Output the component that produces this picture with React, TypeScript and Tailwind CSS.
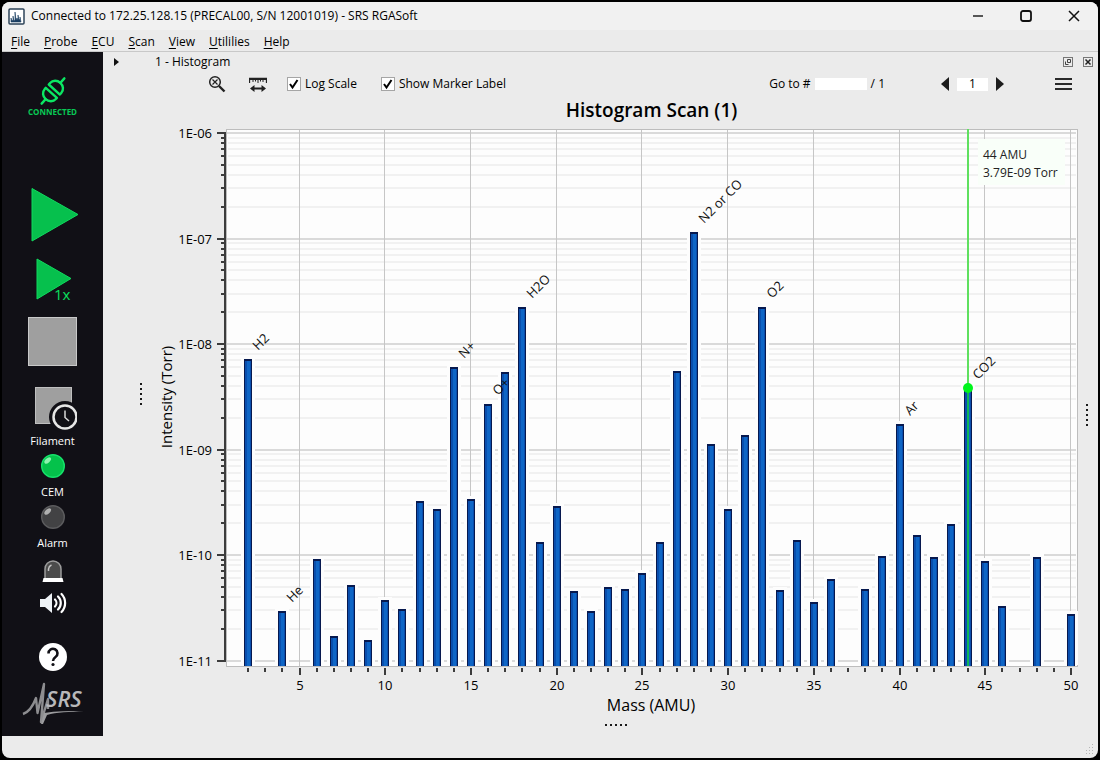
import { useState } from 'react';
import clsx from 'clsx';

type Peak = { mass: number; torr: number; label?: string };

const peaks: Peak[] = [
    { mass: 2, torr: 7.2e-9, label: 'H2' },
    { mass: 4, torr: 2.94e-11, label: 'He' },
    { mass: 6, torr: 9.16e-11 },
    { mass: 7, torr: 1.69e-11 },
    { mass: 8, torr: 5.14e-11 },
    { mass: 9, torr: 1.55e-11 },
    { mass: 10, torr: 3.74e-11 },
    { mass: 11, torr: 3.08e-11 },
    { mass: 12, torr: 3.25e-10 },
    { mass: 13, torr: 2.73e-10 },
    { mass: 14, torr: 6.05e-9, label: 'N+' },
    { mass: 15, torr: 3.4e-10 },
    { mass: 16, torr: 2.7e-9, label: 'O+' },
    { mass: 17, torr: 5.43e-9 },
    { mass: 18, torr: 2.24e-8, label: 'H2O' },
    { mass: 19, torr: 1.33e-10 },
    { mass: 20, torr: 2.91e-10 },
    { mass: 21, torr: 4.51e-11 },
    { mass: 22, torr: 2.94e-11 },
    { mass: 23, torr: 4.98e-11 },
    { mass: 24, torr: 4.71e-11 },
    { mass: 25, torr: 6.82e-11 },
    { mass: 26, torr: 1.33e-10 },
    { mass: 27, torr: 5.55e-9 },
    { mass: 28, torr: 1.15e-7, label: 'N2 or CO' },
    { mass: 29, torr: 1.13e-9 },
    { mass: 30, torr: 2.73e-10 },
    { mass: 31, torr: 1.36e-9 },
    { mass: 32, torr: 2.24e-8, label: 'O2' },
    { mass: 33, torr: 4.61e-11 },
    { mass: 34, torr: 1.39e-10 },
    { mass: 35, torr: 3.59e-11 },
    { mass: 36, torr: 5.86e-11 },
    { mass: 38, torr: 4.71e-11 },
    { mass: 39, torr: 9.79e-11 },
    { mass: 40, torr: 1.75e-9, label: 'Ar' },
    { mass: 41, torr: 1.56e-10 },
    { mass: 42, torr: 9.57e-11 },
    { mass: 43, torr: 1.97e-10 },
    { mass: 44, torr: 3.79e-9, label: 'CO2' },
    { mass: 45, torr: 8.77e-11 },
    { mass: 46, torr: 3.29e-11 },
    { mass: 48, torr: 9.57e-11 },
    { mass: 50, torr: 2.76e-11 },
];

const PLOT = { left: 76, right: 927, top: 5, bottom: 542 };
const decades = [-6, -7, -8, -9, -10, -11];

const xOf = (mass: number) => Math.round(mass * 17.144 + 63.8);
const yOf = (torr: number) => Math.round(9 + (-6 - Math.log10(torr)) * 105.5);

function Chart({ logScale, showLabels }: { logScale: boolean; showLabels: boolean }) {
    const y = (torr: number) => (logScale ? yOf(torr) : Math.round(PLOT.bottom - (torr / 1.2e-7) * 520));
    const masses = Array.from({ length: 49 }, (_, i) => i + 2);
    const minor = decades.slice(1).flatMap((d) => [2, 3, 4, 5, 6, 7, 8, 9].map((n) => yOf(n * 10 ** d)));
    const cursor = xOf(44);

    return (
        <svg viewBox="0 0 930 594" className="block h-auto w-full" role="img" aria-label="Histogram of intensity by mass">
            <rect x={PLOT.left} y={PLOT.top} width={PLOT.right - PLOT.left} height={PLOT.bottom - PLOT.top} fill="#fdfdfd" stroke="#bdbdbd" shapeRendering="crispEdges" />
            <g shapeRendering="crispEdges">
                {minor.map((v) => (
                    <rect key={v} x={PLOT.left + 2} y={v - 1} width={PLOT.right - PLOT.left - 3} height={2} fill="#f1f1f1" />
                ))}
                {decades.map((d) => (
                    <rect key={d} x={PLOT.left + 1} y={yOf(10 ** d) - 1} width={PLOT.right - PLOT.left - 2} height={2} fill="#dadada" />
                ))}
                {masses
                    .filter((m) => m % 5 === 0)
                    .map((m) => (
                        <rect key={m} x={xOf(m) - 1} y={PLOT.top + 1} width={1} height={PLOT.bottom - PLOT.top - 1} fill="#c6c6c6" />
                    ))}
            </g>

            {/* axes */}
            <g fill="#3c3c3c" shapeRendering="crispEdges">
                <rect x={PLOT.left - 2} y={8} width={2} height={530} />
                {minor.map((v) => (
                    <rect key={v} x={PLOT.left - 5} y={v - 1} width={4} height={2} />
                ))}
                {decades.map((d) => (
                    <rect key={d} x={PLOT.left - 9} y={yOf(10 ** d) - 1} width={8} height={2} />
                ))}
                {masses.map((m) => (
                    <rect key={m} x={xOf(m) - 1} y={PLOT.bottom + 2} width={2} height={m % 5 === 0 ? 7 : 4} />
                ))}
            </g>
            <g fontSize="13" fontWeight="500" fill="#000" textAnchor="end">
                {decades.map((d) => (
                    <text key={d} x={62} y={yOf(10 ** d) + 5}>
                        1E-{String(-d).padStart(2, '0')}
                    </text>
                ))}
            </g>
            <g fontSize="13" fontWeight="500" fill="#000" textAnchor="middle">
                {masses
                    .filter((m) => m % 5 === 0)
                    .map((m) => (
                        <text key={m} x={xOf(m)} y={566}>
                            {m}
                        </text>
                    ))}
            </g>
            <text x={501} y={587} fontSize="16" fontWeight="500" textAnchor="middle" fill="#000">
                Mass (AMU)
            </text>
            <text transform="translate(22 273) rotate(-90)" fontSize="15" fontWeight="500" textAnchor="middle" fill="#000">
                Intensity (Torr)
            </text>

            {/* bars */}
            {peaks.map((p) => (
                <rect key={p.mass} x={xOf(p.mass) - 7} y={y(p.torr) - 3} width={14} height={PLOT.bottom - y(p.torr) + 2} fill="#fdfdfd" />
            ))}
            {peaks.map((p) => (
                <g key={p.mass} shapeRendering="crispEdges">
                    <rect x={xOf(p.mass) - 4} y={y(p.torr)} width={8} height={PLOT.bottom - y(p.torr)} fill="#07194f" />
                    <rect x={xOf(p.mass) - 3} y={y(p.torr) + 2} width={6} height={PLOT.bottom - y(p.torr) - 2} fill="#0a4fae" />
                    <rect x={xOf(p.mass) - 1} y={y(p.torr) + 2} width={3} height={PLOT.bottom - y(p.torr) - 2} fill="#0f66c6" />
                </g>
            ))}
            {showLabels &&
                peaks
                    .filter((p) => p.label)
                    .map((p) => (
                        <text key={p.mass} transform={`translate(${xOf(p.mass) + 10} ${y(p.torr) - 8}) rotate(-45)`} fontSize="13" fill="#111">
                            {p.label}
                        </text>
                    ))}

            {/* cursor */}
            <rect x={cursor - 1} y={PLOT.top} width={2} height={y(3.79e-9) - PLOT.top} fill="#5fe05f" shapeRendering="crispEdges" />
            <rect x={cursor - 1} y={y(3.79e-9)} width={2} height={PLOT.bottom - y(3.79e-9)} fill="#10b457" shapeRendering="crispEdges" />
            <circle cx={cursor} cy={y(3.79e-9)} r={5} fill="#00f51d" />
            <rect x={828} y={15} width={87} height={46} fill="#f9fff9" />
            <g fontSize="12" fontWeight="500" fill="#222">
                <text x={833} y={35}>
                    44 AMU
                </text>
                <text x={833} y={53}>
                    3.79E-09 Torr
                </text>
            </g>
        </svg>
    );
}

const menus = ['File', 'Probe', 'ECU', 'Scan', 'View', 'Utililies', 'Help'];

function TitleBar() {
    return (
        <header className="flex h-7 shrink-0 items-center bg-[#f1f1f1] pl-1.5">
            <svg width="17" height="17" viewBox="0 0 17 17" aria-hidden="true">
                <rect x="1" y="1" width="15" height="15" rx="1" fill="#fff" stroke="#2d4358" strokeWidth="1.5" />
                <path d="M3 14v-4l1 3 1-1V8l1 5 1-1V4l1 8 1-2 1 2V7l1 5 1-1V9l1 5z" fill="#1c3f63" stroke="#1c3f63" strokeWidth=".6" />
            </svg>
            <h1 className="ml-1.5 text-xs">Connected to 172.25.128.15 (PRECAL00, S/N 12001019) - SRS RGASoft</h1>
            <div className="ml-auto flex">
                <button aria-label="Minimize" className="flex h-7 w-12 items-center justify-center">
                    <svg width="12" height="12" viewBox="0 0 12 12" stroke="#222" strokeWidth="1.5">
                        <path d="M1 6h10" />
                    </svg>
                </button>
                <button aria-label="Maximize" className="flex h-7 w-12 items-center justify-center">
                    <svg width="12" height="12" viewBox="0 0 12 12" fill="none" stroke="#111" strokeWidth="1.8">
                        <rect x="1" y="1" width="10" height="10" rx="2" />
                    </svg>
                </button>
                <button aria-label="Close" className="flex h-7 w-12 items-center justify-center">
                    <svg width="12" height="12" viewBox="0 0 12 12" stroke="#111" strokeWidth="1.5">
                        <path d="M1 1l10 10M11 1L1 11" />
                    </svg>
                </button>
            </div>
        </header>
    );
}

function Led({ on }: { on?: boolean }) {
    return (
        <svg width="26" height="26" viewBox="0 0 26 26" aria-hidden="true">
            <circle cx="13" cy="13" r="11.3" fill={on ? '#04c24b' : '#424244'} stroke={on ? '#16e36b' : '#5c5c5e'} strokeWidth="1.4" />
            <ellipse cx="7.7" cy="7.5" rx="4" ry="2.2" transform="rotate(-42 7.7 7.5)" fill={on ? '#8cf2ae' : '#b0b0b0'} />
        </svg>
    );
}

function Sidebar() {
    return (
        <aside className="flex w-[101px] shrink-0 flex-col items-center bg-[#111016] pt-6 text-[11px] leading-4 text-white">
            <svg width="28" height="30" viewBox="0 0 28 30" fill="none" stroke="#0be663" strokeWidth="2.4" strokeLinecap="round" aria-hidden="true">
                <g transform="rotate(42 14 15)">
                    <path d="M14 -2v6M14 26v6" />
                    <path d="M6.500 13v-2a7.500 7 0 0 1 15 0v2z" strokeLinejoin="round" />
                    <path d="M6.500 17.500v1.500a7.500 7 0 0 0 15 0v-1.500z" strokeLinejoin="round" />
                </g>
            </svg>
            <p className="text-[8px] font-bold leading-3 text-[#08c955]">CONNECTED</p>
            <button aria-label="Start scan" className="mt-[69px] ml-1">
                <svg width="50" height="56" viewBox="0 0 50 56">
                    <path d="M2 1.500v52.500L48 27.500z" fill="#06c04d" stroke="#10da5e" />
                </svg>
            </button>
            <button aria-label="Single scan" className="mt-3.5">
                <svg width="40" height="48" viewBox="0 0 40 48">
                    <path d="M4 2v40L38 21.500z" fill="#06c04d" stroke="#10da5e" />
                    <text x="21" y="43" fontSize="15" fill="#0be05f" stroke="#111016" strokeWidth="2" paintOrder="stroke">
                        1x
                    </text>
                </svg>
            </button>
            <button aria-label="Stop" className="mt-3 size-[49px] border border-[#c9c9c9] bg-[#9f9f9f]" />
            <button aria-label="Stop at end" className="mt-5">
                <svg width="48" height="46" viewBox="0 0 48 46">
                    <rect x="6.500" y="1.500" width="36" height="36" fill="#9f9f9f" stroke="#bfbfbf" />
                    <circle cx="36" cy="31" r="16" fill="#111016" />
                    <circle cx="36" cy="31" r="11.500" fill="none" stroke="#e6e6e6" strokeWidth="2.500" />
                    <path d="M36 24.500v7l4 3.500" fill="none" stroke="#d8d8d8" strokeWidth="1.500" />
                </svg>
            </button>
            <p className="mt-px">Filament</p>
            <div className="my-1">
                <Led on />
            </div>
            <p className="mt-px">CEM</p>
            <div className="my-1">
                <Led />
            </div>
            <p className="mt-px">Alarm</p>
            <svg className="mt-2" width="24" height="24" viewBox="0 0 24 24" aria-hidden="true">
                <path d="M4 20V10a8 8 0 0 1 16 0v10z" fill="#4b4b4b" stroke="#9c9c9c" strokeWidth="1.500" />
                <path d="M7.500 12v-2a5 5 0 0 1 3-4" fill="none" stroke="#c4c4c4" strokeWidth="1.500" />
                <path d="M2.500 19h19l1 4h-21z" fill="#fff" />
            </svg>
            <button aria-label="Sound" className="mt-2">
                <svg width="30" height="24" viewBox="0 0 30 24" fill="none" stroke="#fff" strokeWidth="2.200" strokeLinecap="round">
                    <path d="M2 8h5l7-6v20l-7-6H2z" fill="#eef2f6" stroke="none" />
                    <path d="M17 8.500a5 5 0 0 1 0 7M20 5.500a9 9 0 0 1 0 13M23.500 3a13 13 0 0 1 0 18" />
                </svg>
            </button>
            <button aria-label="Help" className="mt-7 flex size-7 items-center justify-center rounded-full bg-white">
                <svg width="18" height="22" viewBox="0 0 18 22" fill="none" stroke="#111016" strokeWidth="2.600">
                    <path d="M4.500 7.500a4.500 4.500 0 1 1 7 3.500c-1.700 1.200-2.500 1.800-2.500 4" />
                    <circle cx="9" cy="18.500" r="1.600" fill="#111016" stroke="none" />
                </svg>
            </button>
            <svg className="mt-2.5" width="64" height="46" viewBox="0 0 64 46" role="img" aria-label="SRS">
                <path d="M2 33C8 31 12 25 15 17l1.500 15L23 3l-3 38 7-23v10" fill="none" stroke="#8d8d90" strokeWidth="2.400" strokeLinejoin="round" />
                <path d="M20 43l3-11c12-2 26-2 40-2-14 1-28 1-37 4l-4 9z" fill="#9c9c9f" />
                <text x="25" y="26" fontSize="22" fontWeight="600" fontStyle="italic" fill="#b8b8ba">
                    SRS
                </text>
            </svg>
        </aside>
    );
}

function CheckBox({ label, checked, onChange }: { label: string; checked: boolean; onChange: (value: boolean) => void }) {
    return (
        <label className="flex items-center gap-1">
            <span className="grid">
                <input
                    type="checkbox"
                    checked={checked}
                    onChange={(e) => onChange(e.target.checked)}
                    className="col-start-1 row-start-1 size-3.5 appearance-none border border-[#a5a5a5] bg-white"
                />
                <svg className={clsx('pointer-events-none col-start-1 row-start-1', !checked && 'hidden')} width="14" height="14" viewBox="0 0 14 14" fill="none" stroke="#000" strokeWidth="2">
                    <path d="M3 7l2.500 3.500L10.500 3" />
                </svg>
            </span>
            {label}
        </label>
    );
}

function Toolbar(props: { logScale: boolean; setLogScale: (v: boolean) => void; showLabels: boolean; setShowLabels: (v: boolean) => void }) {
    return (
        <div className="flex h-6 items-center pl-[105px] pr-[26px]">
            <button aria-label="Reset zoom">
                <svg width="18" height="18" viewBox="0 0 18 18" fill="none" stroke="#222" strokeWidth="1.500">
                    <circle cx="7" cy="7" r="5.300" />
                    <path d="M4.500 4.500l5 5M9.500 4.500l-5 5" strokeWidth="1.200" />
                    <path d="M11 11l5.500 5.500" strokeWidth="2.400" />
                </svg>
            </button>
            <button aria-label="Fit range" className="ml-[23px]">
                <svg width="18" height="16" viewBox="0 0 18 16" fill="none" stroke="#222">
                    <path d="M.500 7V2.500h17V7" strokeWidth="1.300" />
                    <path d="M1 3h16" strokeWidth="2" />
                    <path d="M4 3v3M6.500 3v2.500M9 3v4M11.500 3v2.500M14 3v3" />
                    <path d="M3 12.500h12" strokeWidth="2" />
                    <path d="M1 12.500l4.500-3.500v7zM17 12.500l-4.500-3.500v7z" fill="#222" stroke="none" />
                </svg>
            </button>
            <div className="ml-5 flex gap-6">
                <CheckBox label="Log Scale" checked={props.logScale} onChange={props.setLogScale} />
                <CheckBox label="Show Marker Label" checked={props.showLabels} onChange={props.setShowLabels} />
            </div>
            <label className="ml-auto flex items-center gap-1">
                Go to #
                <input type="text" className="h-3 w-[52px] bg-white" />
            </label>
            <span className="ml-1">/ 1</span>
            <div className="ml-14 flex items-center gap-2">
                <button aria-label="Previous scan">
                    <svg width="8" height="14" viewBox="0 0 8 14">
                        <path d="M8 0v14L0 7z" fill="#1c1c1c" />
                    </svg>
                </button>
                <input aria-label="Scan number" defaultValue="1" className="h-[13px] w-[31px] bg-white text-center" />
                <button aria-label="Next scan">
                    <svg width="8" height="14" viewBox="0 0 8 14">
                        <path d="M0 0v14l8-7z" fill="#1c1c1c" />
                    </svg>
                </button>
            </div>
            <button aria-label="Menu" className="ml-[51px]">
                <svg width="17" height="14" viewBox="0 0 17 14" stroke="#2a2a2a" strokeWidth="2">
                    <path d="M0 2h17M0 7h17M0 12h17" />
                </svg>
            </button>
        </div>
    );
}

function Grip({ vertical }: { vertical?: boolean }) {
    return (
        <div className={clsx('flex gap-[3px]', vertical && 'flex-col')}>
            {[0, 1, 2, 3, 4].map((i) => (
                <span key={i} className="size-0.5 bg-[#1a1a1a]" />
            ))}
        </div>
    );
}

export default function App() {
    const [logScale, setLogScale] = useState(true);
    const [showLabels, setShowLabels] = useState(true);

    return (
        <div className="flex min-h-screen flex-col bg-black p-0.5 font-['Open_Sans','Noto_Sans',sans-serif] text-xs font-medium text-black">
            <div className="flex grow flex-col overflow-hidden rounded-lg bg-[#ebebeb]">
                <TitleBar />
                <nav className="flex h-[22px] shrink-0 items-end gap-3.5 border-b border-[#c8c8c8] pb-px pl-[9px]">
                    {menus.map((m) => (
                        <button key={m}>
                            <span className="underline underline-offset-2">{m[0]}</span>
                            {m.slice(1)}
                        </button>
                    ))}
                </nav>
                <div className="flex grow">
                    <Sidebar />
                    <main className="flex min-w-0 grow flex-col">
                        <div className="flex h-5 items-center pl-[11px] pr-[5px]">
                            <button aria-label="Expand panel">
                                <svg width="5" height="8" viewBox="0 0 5 8">
                                    <path d="M0 0v8l5-4z" fill="#111" />
                                </svg>
                            </button>
                            <h2 className="ml-9">1 - Histogram</h2>
                            <div className="ml-auto flex gap-2.5">
                                <button aria-label="Float panel">
                                    <svg width="10" height="10" viewBox="0 0 10 10" fill="none" stroke="#777">
                                        <rect x=".500" y=".500" width="9" height="9" />
                                        <path d="M4.500 2.500h3v3h-3zM2.500 4.500v3h3" stroke="#444" />
                                    </svg>
                                </button>
                                <button aria-label="Close panel">
                                    <svg width="10" height="10" viewBox="0 0 10 10" fill="none" stroke="#777">
                                        <rect x=".500" y=".500" width="9" height="9" />
                                        <path d="M2.500 2.500l5 5M7.500 2.500l-5 5" stroke="#222" strokeWidth="1.500" />
                                    </svg>
                                </button>
                            </div>
                        </div>
                        <Toolbar logScale={logScale} setLogScale={setLogScale} showLabels={showLabels} setShowLabels={setShowLabels} />
                        <h3 className="h-7 pl-[122px] pr-5 text-center text-[19px] font-semibold leading-7 text-black">Histogram Scan (1)</h3>
                        <div className="flex items-center">
                            <div className="flex w-[47px] shrink-0 justify-end pr-2 pb-[54px]">
                                <Grip vertical />
                            </div>
                            <div className="min-w-0 grow">
                                <Chart logScale={logScale} showLabels={showLabels} />
                            </div>
                            <div className="flex w-[18px] shrink-0 justify-center pr-1 pb-3">
                                <Grip vertical />
                            </div>
                        </div>
                        <div className="mt-1.5 flex justify-center pl-[30px]">
                            <Grip />
                        </div>
                    </main>
                </div>
                <footer className="flex h-[22px] shrink-0 items-end justify-end p-1">
                    <svg width="10" height="10" viewBox="0 0 10 10" fill="#b5b5b5" aria-hidden="true">
                        <path d="M8 0h1v1H8zM8 3h1v1H8zM8 6h1v1H8zM8 9h1v1H8zM5 3h1v1H5zM5 6h1v1H5zM5 9h1v1H5zM2 6h1v1H2zM2 9h1v1H2z" />
                    </svg>
                </footer>
            </div>
        </div>
    );
}
